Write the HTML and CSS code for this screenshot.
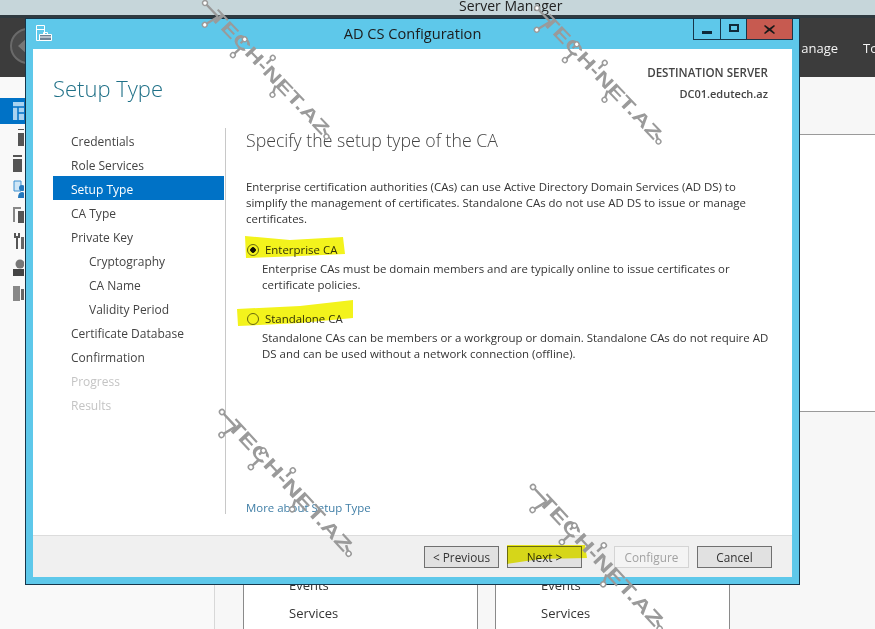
FILE: index.html
```html
<!DOCTYPE html>
<html lang="en">
<head>
<meta charset="utf-8">
<title>AD CS Configuration</title>
<link rel="stylesheet" href="styles.css">
</head>
<body>
<div class="app">
  <div class="app-title"><span class="app-title-text">Server Manager</span></div>
  <div class="app-toolbar">
    <span class="back"></span>
    <span class="menu">Manage</span>
    <span class="menu">Tools</span>
  </div>
  <div class="app-main">
    <aside class="side">
      <div class="side-item active"><svg width="11" height="18" viewBox="0 0 11 18"><path d="M0 0h11v18H0z" fill="#a9d3f0"/><path d="M0 5h11M5 5v13M5 11h6" stroke="#0072c6" stroke-width="1.5"/></svg></div>
      <div class="side-item"><svg width="6" height="17" viewBox="0 0 6 17"><path d="M0 0h6v1H0zM0 4h6v13H0z" fill="#555"/></svg></div>
      <div class="side-item"><svg width="11" height="17" viewBox="0 0 11 17"><path d="M0 0h9v2H0zM0 4h9v13H0z" fill="#555"/></svg></div>
      <div class="side-item"><svg width="11" height="18" viewBox="0 0 11 18"><path d="M1 1h7v10H1z" fill="#cfe6f6" stroke="#3d8fd0"/><circle cx="9" cy="8" r="3" fill="#2378bd"/><path d="M5 18q0-6 4-6t2 6z" fill="#2378bd"/></svg></div>
      <div class="side-item"><svg width="11" height="16" viewBox="0 0 11 16"><path d="M0 0h8v2H2v13H0z" fill="#888"/><path d="M5 4h6v12H5z" fill="#555"/></svg></div>
      <div class="side-item"><svg width="11" height="16" viewBox="0 0 11 16"><path d="M1 0h2v3h2V0h2v5H5v11H3V5H1z" fill="#555"/><path d="M8 4h3v12H8z" fill="#666"/></svg></div>
      <div class="side-item"><svg width="11" height="17" viewBox="0 0 11 17"><circle cx="7" cy="5" r="4.5" fill="#777"/><path d="M0 10h11v7H0z" fill="#444"/></svg></div>
      <div class="side-item"><svg width="11" height="16" viewBox="0 0 11 16"><path d="M0 1h7v15H0z" fill="#888"/><path d="M8 4h3v11H8z" fill="#666"/></svg></div>
    </aside>
    <div class="dash">
      <div class="dash-top"></div>
      <div class="dash-panel"></div>
      <div class="dash-cards">
        <div class="card"><span>Events</span><span>Services</span></div>
        <div class="card"><span>Events</span><span>Services</span></div>
      </div>
    </div>
  </div>
</div>

<section class="win">
  <header class="win-bar">
    <svg class="win-icon" width="16" height="17" viewBox="0 0 16 17"><path d="M.5.5h8v15H.5z" fill="#5ec8ea" stroke="#fff"/><path d="M1 4.500h7" stroke="#fff"/><path d="M3.500 9.500h12v6h-12z" fill="#6f8296" stroke="#fff"/><path d="M7.500 9.500v-2h4v2M4 12h11" fill="none" stroke="#fff"/></svg>
    <h1 class="win-title">AD CS Configuration</h1>
    <div class="caps">
      <span class="cap cap-a"><i class="cap-min"></i></span>
      <span class="cap cap-b"><i class="cap-max"></i></span>
      <span class="cap cap-close"><svg width="11" height="9" viewBox="0 0 11 9"><path d="M1 0l4.500 3.200L10 0l1 1-3.800 3.500L11 8l-1 1-4.500-3.200L1 9 0 8l3.800-3.500L0 1z" fill="#1a1a1a"/></svg></span>
    </div>
  </header>
  <div class="client">
    <div class="body">
      <div class="head">
        <h2 class="page-title">Setup Type</h2>
        <div class="dest">
          <div class="dest-label">DESTINATION SERVER</div>
          <div class="dest-name">DC01.edutech.az</div>
        </div>
      </div>
      <div class="cols">
        <nav class="nav">
          <div class="nav-item">Credentials</div>
          <div class="nav-item">Role Services</div>
          <div class="nav-item selected">Setup Type</div>
          <div class="nav-item">CA Type</div>
          <div class="nav-item">Private Key</div>
          <div class="nav-item sub">Cryptography</div>
          <div class="nav-item sub">CA Name</div>
          <div class="nav-item sub">Validity Period</div>
          <div class="nav-item">Certificate Database</div>
          <div class="nav-item">Confirmation</div>
          <div class="nav-item off">Progress</div>
          <div class="nav-item off">Results</div>
        </nav>
        <main class="content">
          <h3 class="content-title">Specify the setup type of the CA</h3>
          <p class="intro">Enterprise certification authorities (CAs) can use Active Directory Domain Services (AD DS) to simplify the management of certificates. Standalone CAs do not use AD DS to issue or manage certificates.</p>
          <div class="option first">
            <div class="radio-row"><span class="radio checked"></span>Enterprise CA</div>
            <p class="option-desc">Enterprise CAs must be domain members and are typically online to issue certificates or certificate policies.</p>
          </div>
          <div class="option">
            <div class="radio-row"><span class="radio"></span>Standalone CA</div>
            <p class="option-desc">Standalone CAs can be members or a workgroup or domain. Standalone CAs do not require AD DS and can be used without a network connection (offline).</p>
          </div>
          <a class="more" href="#">More about Setup Type</a>
        </main>
      </div>
    </div>
    <footer class="foot">
      <span class="btn">&lt; Previous</span>
      <span class="btn">Next &gt;</span>
      <span class="btn disabled">Configure</span>
      <span class="btn">Cancel</span>
    </footer>
  </div>
</section>

<svg class="marker" width="875" height="629" viewBox="0 0 875 629">
  <path d="M245 236L290 240L343 237L345 254L300 256L246 258Z"/>
  <path d="M237 309L300 306L353 300L353 318L300 323L238 326Z"/>
  <path d="M507 545L585 545L587 558L540 559L507 564Z"/>
</svg>

<svg class="wm wm1" width="170" height="170" viewBox="0 0 170 170"><g transform="translate(6 6) rotate(46.500) scale(.95)"><text class="wm-text" x="14" y="7" textLength="172" lengthAdjust="spacingAndGlyphs">TECH-NET.AZ</text><path class="wm-wire" d="M0 0L20 0M16.500 16L20 0M56.500-2.400V2M60 16.500V6M91-12V-3M119 15L114 6M190 4L182 0"/><circle class="wm-node" cx="0" cy="0" r="2.500"/><circle class="wm-node" cx="16.500" cy="16" r="2.500"/><circle class="wm-node" cx="56.500" cy="-4" r="2.500"/><circle class="wm-node" cx="60" cy="16.500" r="2.500"/><circle class="wm-node" cx="91" cy="-12" r="2.500"/><circle class="wm-node" cx="119" cy="15" r="2.500"/><circle class="wm-node" cx="190" cy="4" r="2.500"/></g></svg>
<svg class="wm wm2" width="170" height="170" viewBox="0 0 170 170"><g transform="translate(6 6) rotate(46.500) scale(.95)"><text class="wm-text" x="14" y="7" textLength="172" lengthAdjust="spacingAndGlyphs">TECH-NET.AZ</text><path class="wm-wire" d="M0 0L20 0M16.500 16L20 0M56.500-2.400V2M60 16.500V6M91-12V-3M119 15L114 6M190 4L182 0"/><circle class="wm-node" cx="0" cy="0" r="2.500"/><circle class="wm-node" cx="16.500" cy="16" r="2.500"/><circle class="wm-node" cx="56.500" cy="-4" r="2.500"/><circle class="wm-node" cx="60" cy="16.500" r="2.500"/><circle class="wm-node" cx="91" cy="-12" r="2.500"/><circle class="wm-node" cx="119" cy="15" r="2.500"/><circle class="wm-node" cx="190" cy="4" r="2.500"/></g></svg>
<svg class="wm wm3" width="170" height="170" viewBox="0 0 170 170"><g transform="translate(6 6) rotate(47)"><text class="wm-text" x="14" y="7" textLength="172" lengthAdjust="spacingAndGlyphs">TECH-NET.AZ</text><path class="wm-wire" d="M0 0L20 0M16.500 16L20 0M56.500-2.400V2M60 16.500V6M91-12V-3M119 15L114 6M190 4L182 0"/><circle class="wm-node" cx="0" cy="0" r="2.500"/><circle class="wm-node" cx="16.500" cy="16" r="2.500"/><circle class="wm-node" cx="56.500" cy="-4" r="2.500"/><circle class="wm-node" cx="60" cy="16.500" r="2.500"/><circle class="wm-node" cx="91" cy="-12" r="2.500"/><circle class="wm-node" cx="119" cy="15" r="2.500"/><circle class="wm-node" cx="190" cy="4" r="2.500"/></g></svg>
<svg class="wm wm4" width="170" height="170" viewBox="0 0 170 170"><g transform="translate(6 6) rotate(47)"><text class="wm-text" x="14" y="7" textLength="172" lengthAdjust="spacingAndGlyphs">TECH-NET.AZ</text><path class="wm-wire" d="M0 0L20 0M16.500 16L20 0M56.500-2.400V2M60 16.500V6M91-12V-3M119 15L114 6M190 4L182 0"/><circle class="wm-node" cx="0" cy="0" r="2.500"/><circle class="wm-node" cx="16.500" cy="16" r="2.500"/><circle class="wm-node" cx="56.500" cy="-4" r="2.500"/><circle class="wm-node" cx="60" cy="16.500" r="2.500"/><circle class="wm-node" cx="91" cy="-12" r="2.500"/><circle class="wm-node" cx="119" cy="15" r="2.500"/><circle class="wm-node" cx="190" cy="4" r="2.500"/></g></svg>
</body>
</html>
```
FILE: styles.css
```css
* { box-sizing: border-box; }
html, body { margin: 0; padding: 0; }
body {
  position: relative;
  width: 875px;
  height: 629px;
  overflow: hidden;
  background: #fff;
  font-family: "Open Sans", "Noto Sans", sans-serif;
  font-size: 12px;
  color: #333;
}
h1, h2, h3, p { margin: 0; font-weight: normal; }

/* Background application */
.app { display: flex; flex-direction: column; height: 629px; }
.app-title {
  height: 15px;
  background: #c6d6da;
  overflow: hidden;
  padding-left: 459px;
  line-height: 11px;
  font-size: 14px;
  color: #222;
}
.app-toolbar {
  height: 62px;
  background: #3c3c3c;
  border-top: 3px solid #2f3a40;
  display: flex;
  align-items: center;
  justify-content: flex-end;
  gap: 25px;
  color: #f4f4f4;
  font-size: 13px;
  position: relative;
  overflow: hidden;
}
.back {
  position: absolute;
  left: 10px;
  top: 10px;
  width: 36px;
  height: 36px;
  border: 2px solid #6a6a6a;
  border-radius: 50%;
  background: #4a4a4a;
}
.back::before {
  content: "";
  position: absolute;
  left: 6px;
  top: 7px;
  border: 9px solid transparent;
  border-left: 0;
  border-right: 10px solid #777;
}
.menu:last-child { width: 12px; overflow: hidden; white-space: nowrap; }
.app-main { flex: 1; display: flex; min-height: 0; background: #f7f7f7; }
.side {
  width: 215px;
  padding-top: 21px;
  border-right: 1px solid #d8d8d8;
  background: #f9f9f9;
}
.side-item {
  height: 26px;
  display: flex;
  align-items: center;
  justify-content: flex-end;
  padding-right: 190px;
}
.side-item.active { background: #0072c6; }
.dash { flex: 1; display: flex; flex-direction: column; }
.dash-top { height: 57px; background: #f7f7f7; }
.dash-panel { height: 278px; background: #fff; border-top: 1px solid #9a9a9a; border-bottom: 1px solid #9a9a9a; }
.dash-cards { flex: 1; display: flex; gap: 17px; padding: 0 0 0 28px; }
.card {
  width: 235px;
  background: #fff;
  border-left: 1px solid #8a8a8a;
  border-right: 1px solid #8a8a8a;
  display: flex;
  flex-direction: column;
  gap: 10px;
  padding: 164px 0 0 45px;
  font-size: 13px;
  color: #333;
}

/* Dialog window */
.win {
  position: absolute;
  left: 25px;
  top: 18px;
  width: 775px;
  height: 567px;
  background: #5ec8ea;
  border: 1px solid #17364a;
  padding: 0 7px 7px;
  display: flex;
  flex-direction: column;
}
.win-bar {
  height: 30px;
  flex: none;
  display: flex;
  align-items: flex-start;
  position: relative;
}
.win-icon { position: absolute; left: 3px; top: 6px; }
.win-title {
  width: 100%;
  text-align: center;
  font-size: 14.600px;
  line-height: 29px;
  color: #1c1c1c;
}
.caps { position: absolute; right: -1px; top: 0; display: flex; height: 21px; }
.cap {
  border: 1px solid #17364a;
  border-top: 0;
  display: flex;
  align-items: center;
  justify-content: center;
}
.cap + .cap { border-left: 0; }
.cap-a { width: 28px; }
.cap-b { width: 26px; }
.cap-close { width: 46px; background: #c75a50; }
.cap-min { width: 10px; height: 3px; margin-top: 6px; background: #0f2a3a; }
.cap-max { width: 10px; height: 8px; margin-top: -2px; border: 2px solid #0f2a3a; }
.client { flex: 1; display: flex; flex-direction: column; background: #fff; min-height: 0; }
.body { flex: 1; display: flex; flex-direction: column; min-height: 0; }
.head { height: 79px; flex: none; display: flex; justify-content: space-between; padding: 0 24px 0 20px; }
.page-title {
  font-size: 22px;
  font-weight: 300;
  line-height: 32px;
  margin-top: 23px;
  color: #1f7087;
}
.dest { text-align: right; padding-top: 14px; color: #444; }
.dest-label { line-height: 20px; font-weight: 600; font-size: 11.600px; }
.dest-name { line-height: 20px; margin-top: 1px; font-weight: 600; font-size: 11px; }
.cols { flex: 1; display: flex; padding: 0 0 21px 20px; min-height: 0; }
.nav { width: 171px; flex: none; }
.nav-item { height: 24px; line-height: 28px; padding-left: 18px; color: #444; overflow: hidden; }
.nav-item.sub { padding-left: 36px; }
.nav-item.selected { background: #0072c6; color: #fff; }
.nav-item.off { color: #c4c4c4; }
.content {
  flex: 1;
  margin-left: 1px;
  border-left: 1px solid #c8c8c8;
  padding: 0 22px 0 20px;
  display: flex;
  flex-direction: column;
  font-size: 11.450px;
}
.content-title { font-size: 17.700px; font-weight: 300; line-height: 24px; color: #444; }
.intro { margin-top: 27px; line-height: 16px; color: #333; }
.option { margin-top: 18px; }
.option.first { margin-top: 15px; }
.radio-row { display: flex; align-items: center; gap: 6px; line-height: 16px; color: #333; }
.radio {
  width: 12px;
  height: 12px;
  margin-left: 1px;
  border: 1px solid #6d6d6d;
  border-radius: 50%;
  background: transparent;
  flex: none;
}
.radio.checked { background: radial-gradient(circle, #111 0 2.500px, #fff 3px); }
.option-desc { margin: 3px 0 0 16px; line-height: 16px; color: #333; }
.more { margin-top: auto; margin-bottom: -3px; color: #3f7ea6; text-decoration: none; line-height: 18px; }
.foot {
  height: 42px;
  flex: none;
  background: #f0f0f0;
  border-top: 1px solid #dcdcdc;
  display: flex;
  align-items: center;
  justify-content: flex-end;
  gap: 8px;
  padding: 0 20px 0 0;
  font-size: 11.800px;
}
.btn {
  width: 75px;
  height: 22px;
  line-height: 20px;
  text-align: center;
  background: #e1e1e1;
  border: 1px solid #707070;
  color: #333;
}
.btn.disabled {
  margin-left: 24px;
  background: #f4f4f4;
  border-color: #d4d4d4;
  color: #a2a2a2;
}

/* Overlays */
.marker { position: absolute; left: 0; top: 0; mix-blend-mode: multiply; pointer-events: none; fill: #f3f31c; }
.wm { position: absolute; pointer-events: none; overflow: visible; }
.wm1 { left: 199px; top: -3px; }
.wm2 { left: 531px; top: 2px; }
.wm3 { left: 216px; top: 406px; }
.wm4 { left: 527px; top: 481px; }
.wm-text { font-family: "Liberation Sans", sans-serif; font-size: 19px; font-weight: 700; fill: #9a9a9a; }
.wm-wire { fill: none; stroke: #9a9a9a; stroke-width: 2.500; }
.wm-node { fill: #fff; stroke: #9a9a9a; stroke-width: 1.500; }
```
